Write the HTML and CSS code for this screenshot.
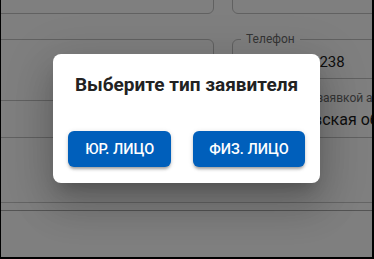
FILE: index.html
```html
<!DOCTYPE html>
<html lang="ru">
<head>
    <meta charset="UTF-8">
    <meta name="viewport" content="width=device-width, initial-scale=1.0">
    <title>Тип заявителя</title>
    <link rel="stylesheet" href="styles.css">
</head>
<body>
    <!-- экран с формой и модальным окном -->
    <div class="screen">
        <div class="page">
            <div class="row first">
                <div class="field left"><span class="value">Московская обл, г. Котинск, ул. Скребная 456</span></div>
                <div class="field right"></div>
            </div>
            <div class="row second">
                <div class="field left tall"></div>
                <div class="field right">
                    <span class="label">Телефон</span>
                    <span class="value">79150000238</span>
                </div>
            </div>
            <div class="row third">
                <div class="field wide">
                    <span class="label">Адрес совпадает с заявкой адрес</span>
                    <span class="value">Московская область</span>
                </div>
            </div>
            <div class="divider"></div>
            <div class="divider dark"></div>
        </div>

        <!-- затемнение и диалог -->
        <div class="overlay">
            <div class="dialog">
                <h2 class="dialog-title">Выберите тип заявителя</h2>
                <div class="dialog-actions">
                    <button class="btn">Юр. лицо</button>
                    <button class="btn">Физ. лицо</button>
                </div>
            </div>
        </div>
    </div>
</body>
</html>
```

FILE: styles.css
```css
*{
    margin: 0;
    padding: 0;
    box-sizing: border-box;
}
body{
    background-color: #000;
    font-family: Roboto, "Noto Sans", sans-serif;
    width: 374px;
    height: 259px;
    overflow: hidden;
}
/* рабочая область внутри чёрной рамки */
.screen{
    position: relative;
    width: 371px;
    height: 257px;
    margin-left: 1px;
    background-color: #fff;
    overflow: hidden;
}
.row{
    display: flex;
    align-items: flex-start;
    gap: 18px;
    margin-left: -21px;
}
.row.first{
    margin-top: -26px;
}
.row.second{
    margin-top: 25px;
}
.row.third{
    margin-top: -1px;
}
.field{
    position: relative;
    flex-shrink: 0;
    height: 40px;
    border: 1px solid #c2c2c2;
    border-radius: 6px;
    display: flex;
    align-items: center;
    padding: 0 14px;
}
.field.left{
    width: 234px;
}
.field.tall{
    height: 62px;
}
.field.right{
    width: 160px;
}
.field.wide{
    width: 420px;
    height: 38px;
    padding-left: 283px;
}
.value{
    font-size: 16px;
    color: #1c1c1c;
    white-space: nowrap;
    padding-top: 6px;
}
.row.first .value{
    padding-top: 0;
    margin-top: -9px;
    margin-left: -36px;
}
.field.right .value{
    font-size: 15px;
    padding-left: 5px;
}
.field.wide .value{
    padding-top: 0;
}
/* подпись поля на линии рамки */
.label{
    position: absolute;
    top: -8px;
    left: 8px;
    padding: 0 5px;
    background-color: #fff;
    font-size: 12px;
    color: #6b6b6b;
    white-space: nowrap;
}
.field.wide .label{
    top: -10px;
    left: 222px;
}
.divider{
    height: 1px;
    background-color: #c8c8c8;
    margin-top: 64px;
}
.divider.dark{
    background-color: #a8a8a8;
    margin-top: 7px;
}

/* затемнение */
.overlay{
    position: absolute;
    inset: 0;
    background-color: rgba(0, 0, 0, 0.5);
    display: flex;
    justify-content: center;
    align-items: flex-start;
    padding-top: 54px;
}
.dialog{
    width: 267px;
    background-color: #fff;
    border-radius: 8px;
    padding: 19px 16px 16px;
    box-shadow: 0 11px 15px -7px rgba(0,0,0,.2), 0 24px 38px 3px rgba(0,0,0,.14), 0 9px 46px 8px rgba(0,0,0,.12);
}
.dialog-title{
    font-size: 19px;
    line-height: 24px;
    font-weight: 700;
    color: #222;
    text-align: center;
    white-space: nowrap;
}
.dialog-actions{
    display: flex;
    justify-content: center;
    gap: 22px;
    margin-top: 34px;
}
.btn{
    flex-shrink: 0;
    height: 36px;
    padding: 0 16px;
    border: none;
    border-radius: 6px;
    background-color: #005fbb;
    color: #fff;
    font-family: Roboto, sans-serif;
    font-size: 14.5px;
    font-weight: 500;
    text-transform: uppercase;
    white-space: nowrap;
    box-shadow: 0 3px 3px -1px rgba(0,0,0,.3), 0 1px 5px rgba(0,0,0,.15);
}
.btn:first-child{
    padding: 0 17px;
}
```
